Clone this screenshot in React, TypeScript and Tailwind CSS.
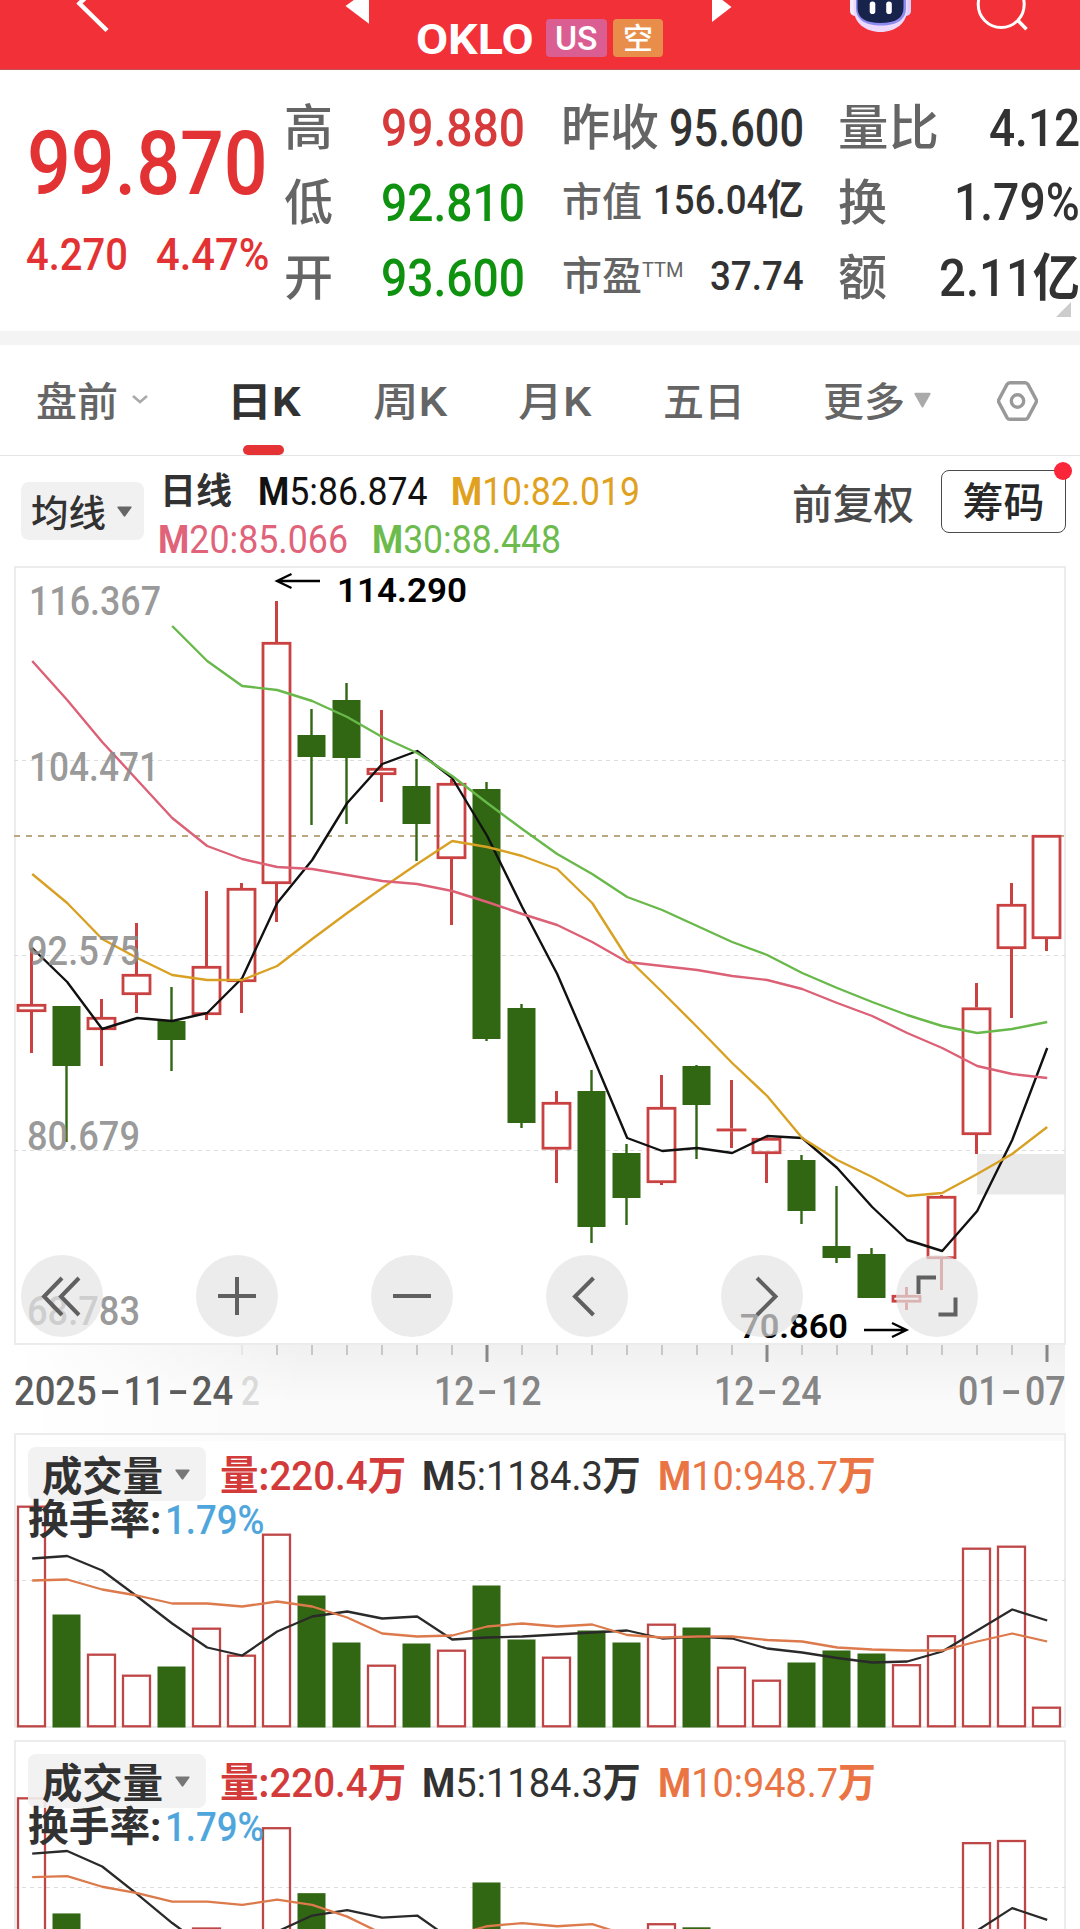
import React, { useLayoutEffect, useRef, useState } from "react";

const RED = "#c94141";
const GREEN = "#316613";
const BASE_X = 31.5;
const STEP = 35;

const cx = (i: number) => BASE_X + STEP * i;

// high, body top, body bottom, low, up
const candles: [number, number, number, number, boolean][] = [
  [948, 1004, 1012, 1053, true],
  [1006, 1006, 1066, 1142, false],
  [999, 1017, 1030, 1066, true],
  [923, 974, 995, 1013, true],
  [987, 1021, 1040, 1071, false],
  [891, 966, 1015, 1020, true],
  [883, 888, 982, 1013, true],
  [601, 642, 884, 922, true],
  [709, 735, 757, 825, false],
  [683, 700, 758, 824, false],
  [710, 768, 775, 802, true],
  [759, 786, 824, 861, false],
  [779, 783, 859, 925, true],
  [782, 789, 1039, 1041, false],
  [1004, 1008, 1123, 1128, false],
  [1091, 1102, 1149.5, 1183, true],
  [1070, 1091, 1227, 1243, false],
  [1144, 1153, 1198, 1225, false],
  [1075, 1107, 1183, 1185, true],
  [1065, 1066, 1105, 1159, false],
  [1080, 1128.6, 1131.2, 1148, true],
  [1136, 1138, 1154, 1183, true],
  [1155, 1160, 1211, 1224, false],
  [1186, 1246, 1258, 1263, false],
  [1248, 1254, 1298, 1298, false],
  [1287, 1295, 1302.5, 1310, true],
  [1195, 1196, 1259, 1290, true],
  [983, 1007.5, 1135, 1154, true],
  [883, 904, 949, 1018, true],
  [835, 835, 939, 951, true],
];

const ma5 = [948, 982, 1029, 1018, 1021, 1013, 978, 903, 860, 803, 764, 751, 778, 836, 907, 974, 1055, 1138, 1151, 1148, 1153, 1136, 1138, 1168, 1207, 1240, 1251, 1211, 1140, 1048];
const ma10 = [874, 903, 939, 958, 975, 980, 980, 966, 939, 913, 888, 864, 841, 847, 856, 869, 903, 958, 992, 1027, 1063, 1096, 1138, 1160, 1177, 1196, 1193, 1174, 1154, 1127];
const ma20 = [661, 700, 742, 780, 818, 846, 859, 867, 869, 875, 881, 884, 891, 902, 914, 925, 942, 962, 966, 970, 976, 980, 989, 1003, 1016, 1033, 1048, 1066, 1074, 1078];
const ma30 = [626, 661, 686, 690, 701, 717, 737, 753, 776, 803, 829, 854, 874, 897, 910, 926, 942, 955, 973, 988, 1002, 1015, 1026, 1033, 1029, 1022];

const volumes = [222, 113, 74, 53, 61, 100, 73, 194, 132, 85, 63, 84, 78, 142, 88, 71, 97, 85, 104, 100, 61, 48, 65, 77, 74, 63.5, 92.5, 180, 182, 21];
const vol5 = [169, 171.5, 157, 131, 104, 80, 72, 96, 111, 116, 109, 111, 88, 90, 91, 93, 95, 97, 89, 91, 89, 79, 75, 69.5, 65, 66, 76, 97, 118, 107];
const vol10 = [147, 148, 138, 132, 124, 124, 121, 126, 121, 110, 94, 91, 92, 101, 104, 101, 103, 92.5, 90, 91, 91, 87.5, 86, 80, 78, 77, 77, 86, 94, 86];

const points = (ys: number[], from = 0) =>
  ys.map((y, i) => `${cx(i + from) + 0.7},${y}`).join(" ");

type FitProps = { w: number; className?: string; children: React.ReactNode };

// Squeezes a single line of text to the given width
function Fit({ w, className = "", children }: FitProps) {
  const ref = useRef<HTMLSpanElement>(null);
  const [scale, setScale] = useState(1);

  useLayoutEffect(() => {
    if (ref.current) setScale(w / ref.current.offsetWidth);
  }, [w]);

  return (
    <span className={`flex shrink-0 leading-none ${className}`} style={{ width: w }}>
      <span
        ref={ref}
        className="block shrink-0 origin-left whitespace-nowrap"
        style={{ transform: `scaleX(${scale})` }}
      >
        {children}
      </span>
    </span>
  );
}

function Caret({ className = "" }: { className?: string }) {
  return (
    <svg className={`shrink-0 ${className}`} viewBox="0 0 16 12" preserveAspectRatio="none">
      <path d="M1 0.5h14q1 0.4 0.4 1.4L8.8 11.2q-0.8 1-1.6 0L0.6 1.9Q0 0.9 1 0.5z" fill="currentColor" />
    </svg>
  );
}

function Header() {
  return (
    <header className="flex h-[70px] items-start border-b border-[#c0555a] bg-[#f23038]">
      <svg className="ml-[72px] h-[69px] w-10 shrink-0" viewBox="72 0 40 69">
        <path d="M107 30.5L79.5 3.5L92 -9" fill="none" stroke="#fff" strokeWidth="4.5" />
      </svg>
      <svg className="ml-[233px] h-[69px] w-[25px] shrink-0" viewBox="345 0 25 69">
        <path d="M345.5 6L369 -11V23.7z" fill="#fff" />
      </svg>
      <div className="ml-[46px] mt-[19px] flex h-[38px] items-center text-white">
        <Fit w={118} className="mt-[3px] text-[43px] font-bold">OKLO</Fit>
        <div className="ml-3 flex h-[38px] w-[61px] items-center justify-center rounded bg-[#db5e93]">
          <Fit w={43} className="mt-px text-[33px] font-medium">US</Fit>
        </div>
        <div className="ml-1.5 flex h-[38px] w-[50px] items-center justify-center rounded bg-[#e88e4a]">
          <span className="mt-0.5 text-[30px] font-medium leading-none">空</span>
        </div>
      </div>
      <svg className="ml-[49px] h-[69px] w-5 shrink-0" viewBox="712 0 20 69">
        <path d="M712 -8L731.5 7L712 22z" fill="#fff" />
      </svg>
      <svg className="ml-[117px] h-[69px] w-[63px] shrink-0" viewBox="849 0 63 69">
        <rect x="850" y="-4" width="10" height="20" rx="5" fill="#f7ecfb" />
        <rect x="901" y="-4" width="10" height="20" rx="5" fill="#dccdf8" />
        <path d="M853.500 -6h54v14c0 15-12 24-27 24S853.500 23 853.500 8z" fill="#ecd9fb" />
        <path d="M856 -6h50v14c0 11-8 17.500-25 17.500S856 19 856 8z" fill="#8d8bf0" />
        <path d="M857.500 -6h46v14c0 10-8 15-23 15s-23-5-23-15z" fill="#18234c" />
        <rect x="869.700" y="1.500" width="5.600" height="12.500" rx="2.800" fill="#fff" />
        <rect x="886.200" y="1.500" width="5.600" height="12.500" rx="2.800" fill="#fff" />
      </svg>
      <svg className="ml-[63px] h-[69px] w-[54px] shrink-0" viewBox="975 0 54 69">
        <circle cx="1001.200" cy="4.500" r="23" fill="none" stroke="#fff" strokeWidth="3" />
        <path d="M1017.500 20l9 9.300" stroke="#fff" strokeWidth="3.500" />
      </svg>
    </header>
  );
}

function Quote() {
  return (
    <section className="flex h-[261px] text-[#323232]">
      <div className="w-[285px] shrink-0 text-[#e33233]">
        <Fit w={241} className="ml-[27px] mt-[49px] text-[89px] font-medium">99.870</Fit>
        <div className="mt-[24px] flex pl-[26px] text-[45px] font-medium">
          <Fit w={102}>4.270</Fit>
          <Fit w={113} className="ml-[28px]">4.47%</Fit>
        </div>
      </div>
      <div className="mt-5 flex w-[278px] shrink-0 flex-col text-[51px] font-medium">
        <div className="flex h-[75px] items-center">
          <Fit w={49} className="-ml-px mt-0.5 text-[49px] text-[#656565]">高</Fit>
          <Fit w={144} className="ml-[48px] mt-px text-[#d63a3a]">99.880</Fit>
        </div>
        <div className="flex h-[75px] items-center">
          <Fit w={49} className="-ml-px mt-0.5 text-[49px] text-[#656565]">低</Fit>
          <Fit w={144} className="ml-[48px] mt-px text-[#0f920f]">92.810</Fit>
        </div>
        <div className="flex h-[75px] items-center">
          <Fit w={49} className="-ml-px mt-0.5 text-[49px] text-[#656565]">开</Fit>
          <Fit w={144} className="ml-[48px] mt-px text-[#0f920f]">93.600</Fit>
        </div>
      </div>
      <div className="mt-5 flex w-[241px] shrink-0 flex-col font-medium">
        <div className="flex h-[75px] items-center justify-between">
          <Fit w={98} className="-ml-0.5 mt-0.5 text-[49px] text-[#656565]">昨收</Fit>
          <Fit w={135} className="mt-px text-[51px]">95.600</Fit>
        </div>
        <div className="flex h-[75px] items-center justify-between">
          <Fit w={80} className="-ml-px text-[40px] text-[#656565]">市值</Fit>
          <Fit w={151} className="-mt-1 text-[41px]">156.04<b>亿</b></Fit>
        </div>
        <div className="flex h-[75px] items-center">
          <Fit w={80} className="-ml-px -mt-0.5 text-[40px] text-[#656565]">市盈</Fit>
          <Fit w={42} className="mb-[14px] text-[21px] font-normal text-[#656565]">TTM</Fit>
          <Fit w={94} className="-mt-[3px] ml-auto text-[41px]">37.74</Fit>
        </div>
      </div>
      <div className="mt-5 ml-[34px] flex w-[242px] shrink-0 flex-col text-[51px] font-medium">
        <div className="flex h-[75px] items-center justify-between">
          <Fit w={101} className="mt-0.5 text-[49px] text-[#656565]">量比</Fit>
          <Fit w={91} className="mt-px">4.12</Fit>
        </div>
        <div className="flex h-[75px] items-center justify-between">
          <Fit w={49} className="mt-0.5 text-[49px] text-[#656565]">换</Fit>
          <Fit w={126}>1.79%</Fit>
        </div>
        <div className="flex h-[75px] items-center justify-between">
          <Fit w={49} className="mt-0.5 text-[49px] text-[#656565]">额</Fit>
          <Fit w={141} className="mt-px">2.11<b>亿</b></Fit>
        </div>
        <svg className="-mt-[13px] mr-[9px] h-[15px] w-[15px] self-end" viewBox="0 0 15 15">
          <path d="M15 0v15H0z" fill="#ccc" />
        </svg>
      </div>
    </section>
  );
}

function Tabs() {
  return (
    <nav className="flex h-[111px] items-center border-b border-[#e5e5e5] text-[40px] font-medium text-[#656565]">
      <Fit w={82} className="ml-9 mt-[5px]">盘前</Fit>
      <svg className="ml-[14px] mt-[-2px] h-[9px] w-4 shrink-0" viewBox="0 0 16 9">
        <path d="M1 1l7 6 7-6" fill="none" stroke="#aaa" strokeWidth="2.6" />
      </svg>
      <div className="relative ml-[79px] flex h-full items-center">
        <Fit w={73} className="mt-[5px] font-bold text-[#323232]">日K</Fit>
        <div className="absolute bottom-0 left-[16px] h-[10px] w-[41px] rounded-full bg-[#e53235]" />
      </div>
      <Fit w={74} className="ml-[73px] mt-[5px]">周K</Fit>
      <Fit w={73} className="ml-[71px] mt-[5px]">月K</Fit>
      <Fit w={82} className="ml-[72px] mt-[5px]">五日</Fit>
      <Fit w={82} className="ml-[78px] mt-[5px]">更多</Fit>
      <Caret className="ml-[9px] h-4 w-[17px] text-[#aaa]" />
      <svg className="ml-[66px] mt-px h-10 w-[41px] shrink-0" viewBox="0 0 41 40" fill="none" stroke="#999" strokeWidth="3.4">
        <path d="M13 1.700H28Q30 1.700 31 3.400L39 18.300Q40 20 39 21.700L31 36.600Q30 38.300 28 38.300H13Q11 38.300 10 36.600L2 21.700Q1 20 2 18.300L10 3.400Q11 1.700 13 1.700z" />
        <circle cx="20.500" cy="20" r="6.200" />
      </svg>
    </nav>
  );
}

function Averages() {
  return (
    <div className="flex h-[110px] text-[38px]">
      <button className="ml-[21px] mt-[26px] flex h-[58px] w-[123px] shrink-0 items-center rounded-lg bg-[#f1f1f1]">
        <Fit w={75} className="ml-2.5 mt-1.5 text-[37px] font-medium text-[#323232]">均线</Fit>
        <Caret className="ml-[11px] h-[11px] w-[15px] text-[#666]" />
      </button>
      <div className="ml-4 w-[490px] shrink-0">
        <div className="mt-[17px] flex items-center">
          <Fit w={72} className="text-[36px] font-bold text-[#323232]">日线</Fit>
          <Fit w={170} className="ml-[26px] text-[#111]"><b>M</b>5:86.874</Fit>
          <Fit w={189} className="ml-[23px] text-[#e0a11f]"><b>M</b>10:82.019</Fit>
        </div>
        <div className="mt-[10px] flex items-center">
          <Fit w={190} className="-ml-0.5 text-[#e0637a]"><b>M</b>20:85.066</Fit>
          <Fit w={189} className="ml-[24px] text-[#6dbb4c]"><b>M</b>30:88.448</Fit>
        </div>
      </div>
      <Fit w={122} className="ml-[142px] mt-[29px] text-[41px] font-medium text-[#4a4a4a]">前复权</Fit>
      <div className="relative ml-[27px] mt-[14px] flex h-[63px] w-[125px] shrink-0 items-center justify-center rounded-lg border border-[#4a4a4a]">
        <Fit w={82} className="mt-1 text-[41px] font-medium text-[#282828]">筹码</Fit>
        <div className="absolute -right-[7px] -top-[9px] size-[18px] rounded-full bg-[#fb263a]" />
      </div>
    </div>
  );
}

const scaleLabels: [string, number, number, number][] = [
  ["116.367", 29, 615, 132],
  ["104.471", 29, 781, 130],
  ["92.575", 27, 965, 113],
  ["80.679", 27, 1150, 113],
  ["68.783", 27, 1324.5, 113],
];

const controls = [62, 237, 412, 587, 762, 937];

const controlPaths = [
  "M62 1278L44 1296.500L62 1315M79 1278L61 1296.500L79 1315",
  "M218 1296H256M237 1277V1315",
  "M393 1296H431",
  "M593.500 1278L575 1296.500L593.500 1315",
  "M757 1278L775.500 1296.500L757 1315",
  "M918.500 1294V1277.500H936M955.500 1297.500V1314.500H938.500",
];

function KLine() {
  return (
    <svg className="block h-[779px] w-full" viewBox="0 566 1080 779">
      <path d="M15 1345V567H1065V1345" fill="none" stroke="#ececec" strokeWidth="2" />
      <path d="M15 1344H1065" stroke="#ececec" strokeWidth="2" />
      {[760.5, 955.5, 1150.5].map((y) => (
        <path key={y} d={`M14 ${y}H1065`} stroke="#dcdcdc" strokeWidth="1" strokeDasharray="4 4" />
      ))}
      <path d="M14 836H1065" stroke="#b9a880" strokeWidth="2" strokeDasharray="6 6" />
      <rect x="977" y="1154" width="89" height="40.500" fill="#e9e9e9" />

      {candles.map(([high, top, bottom, low, up], i) => (
        <g key={i}>
          <path
            d={`M${cx(i)} ${high}V${top}M${cx(i)} ${bottom}V${low}`}
            stroke={up ? RED : GREEN}
            strokeWidth={up ? 3 : 2.4}
          />
          {up ? (
            <rect
              x={cx(i) - 13.5}
              y={top + 1.3}
              width={27}
              height={Math.max(bottom - top - 2.6, 0.1)}
              fill="none"
              stroke={RED}
              strokeWidth="2.8"
            />
          ) : (
            <rect x={cx(i) - 14} y={top} width={28} height={bottom - top} fill={GREEN} />
          )}
        </g>
      ))}

      <g fill="none" strokeWidth="2.4" strokeLinejoin="round">
        <polyline points={points(ma5)} stroke="#111" />
        <polyline points={points(ma10)} stroke="#d9a123" />
        <polyline points={points(ma20)} stroke="#dc6076" />
        <polyline points={points(ma30, 4)} stroke="#68b84a" />
      </g>

      <g fill="#8c8c8c" fillOpacity="0.88" fontSize="40" fontWeight="500">
        {scaleLabels.map(([text, x, y, w]) => (
          <text key={text} x={x} y={y} textLength={w} lengthAdjust="spacingAndGlyphs">{text}</text>
        ))}
      </g>

      <g fontSize="34" fontWeight="600">
        <text x="337" y="602" textLength="130" lengthAdjust="spacingAndGlyphs">114.290</text>
        <text x="740" y="1338" textLength="108" lengthAdjust="spacingAndGlyphs">70.860</text>
      </g>
      <g fill="none" stroke="#000" strokeWidth="2.3">
        <path d="M320 581H277M291.500 574L277 581L291.500 588" />
        <path d="M864 1330H906M892 1323L906.500 1330L892 1337" />
      </g>

      {controls.map((x, i) => (
        <g key={x}>
          <circle cx={x} cy={1296} r={41} fill="#e4e4e4" fillOpacity="0.7" />
          <path d={controlPaths[i]} fill="none" stroke="#606060" strokeWidth="4" />
        </g>
      ))}
    </svg>
  );
}

function DateText({ w, className = "", children }: { w: number; className?: string; children: string }) {
  return (
    <Fit w={w} className={className}>
      {children.split("-").map((part, i) => (
        <React.Fragment key={i}>
          {i > 0 && <span className="mx-[8px] inline-block scale-x-[1.7]">-</span>}
          {part}
        </React.Fragment>
      ))}
    </Fit>
  );
}

function DateAxis() {
  return (
    <div className="h-[88px] px-[15px]">
      <div className="h-[96px] bg-[linear-gradient(to_right,#fff_0%,#fff0_28%),linear-gradient(to_bottom,#f0f0f0,#fafafa_60%)]">
        <svg className="block h-[18px] w-full" viewBox="15 1345 1050 18">
          {Array.from({ length: 24 }, (_, k) => k + 6).map((i) => {
            const major = i === 13 || i === 21 || i === 29;
            return (
              <path
                key={i}
                d={`M${cx(i) + 0.5} 1345v${major ? 17 : 10}`}
                stroke={major ? "#888" : "#bdbdbd"}
                strokeWidth={major ? 3 : 1.6}
                opacity={i === 6 ? 0.3 : 1}
              />
            );
          })}
        </svg>
        <div className="mt-[9px] flex text-[40px] font-medium text-[#858585]">
          <DateText w={219} className="-ml-px text-[#5c5c5c]">2025-11-24</DateText>
          <Fit w={19} className="ml-[8px] text-[#dadada]">2</Fit>
          <DateText w={108} className="ml-[174px]">12-12</DateText>
          <DateText w={108} className="ml-[172px]">12-24</DateText>
          <DateText w={108} className="ml-[136px]">01-07</DateText>
        </div>
      </div>
    </div>
  );
}

type VolumeProps = { base: number; ratio?: number };

function Volume({ base, ratio = 1 }: VolumeProps) {
  const line = (vs: number[]) => points(vs.map((v) => base - v * ratio));

  return (
    <section className="relative h-[307px] shrink-0 overflow-hidden">
      <svg className="block h-[307px] w-full" viewBox="0 0 1080 307">
        <path d="M15 294V1H1065V294" fill="none" stroke="#ececec" strokeWidth="2" />
        {ratio === 1 && <path d="M15 294H1065" stroke="#ececec" strokeWidth="2" />}
        <path d="M14 147.500H1065" stroke="#dcdcdc" strokeDasharray="4 4" />
        {volumes.map((v, i) =>
          candles[i][4] ? (
            <rect
              key={i}
              x={cx(i) - 13.5}
              y={base - v * ratio + 1.2}
              width={27}
              height={v * ratio - 2.4}
              fill="none"
              stroke="#bf4646"
              strokeWidth="2.3"
            />
          ) : (
            <rect key={i} x={cx(i) - 14} y={base - v * ratio} width={28} height={v * ratio} fill={GREEN} />
          )
        )}
        <g fill="none" strokeWidth="2.3" strokeLinejoin="round">
          <polyline points={line(vol5)} stroke="#2a2a2a" />
          <polyline points={line(vol10)} stroke="#dc7a4c" />
        </g>
      </svg>

      <div className="absolute left-[28px] top-[14px] text-[41px] text-[#323232]">
        <div className="flex h-[54px] items-center">
          <button className="flex h-[54px] w-[178px] items-center rounded-lg bg-[#f1f1f1]/90">
            <Fit w={121} className="ml-[14px] mt-1.5 font-bold">成交量</Fit>
            <Caret className="ml-[12px] h-[11px] w-[15px] text-[#777]" />
          </button>
          <Fit w={186} className="ml-[14px] mt-1 text-[#d33b3b]"><b>量:</b><span className="font-medium">220.4</span><b>万</b></Fit>
          <Fit w={219} className="ml-[16px] mt-1"><b>M</b>5:1184.3<b>万</b></Fit>
          <Fit w={218} className="ml-[17px] mt-1 text-[#ea7443]"><b>M</b>10:948.7<b>万</b></Fit>
        </div>
        <div className="-mt-px flex items-center">
          <Fit w={134} className="font-bold">换手率:</Fit>
          <Fit w={100} className="ml-[3px] font-medium text-[#4fa6dc]">1.79%</Fit>
        </div>
      </div>
    </section>
  );
}

export default function App() {
  return (
    <div className="h-[1929px] w-[1080px] overflow-hidden bg-white font-['Roboto','Noto_Sans_CJK_SC',sans-serif]">
      <Header />
      <Quote />
      <div className="h-[14px] bg-[#f4f4f4]" />
      <Tabs />
      <Averages />
      <KLine />
      <DateAxis />
      <Volume base={294.5} />
      <Volume base={294} ratio={1.067} />
    </div>
  );
}
